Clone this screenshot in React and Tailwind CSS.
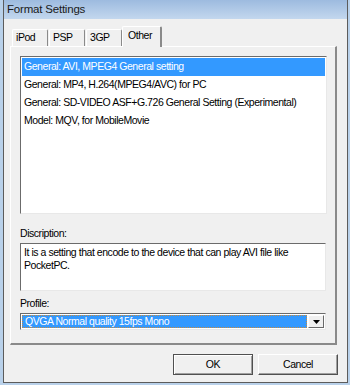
import React from "react";

const items = [
  "General: AVI, MPEG4 General setting",
  "General: MP4, H.264(MPEG4/AVC) for PC",
  "General: SD-VIDEO ASF+G.726 General Setting (Experimental)",
  "Model: MQV, for MobileMovie",
];

const tabs = ["iPod", "PSP", "3GP"];

export default function App() {
  return (
    <div className="w-[350px] h-[385px] bg-[#b9d1ea] pl-[3px] pr-[2px] pb-[2px] font-['Liberation_Sans',sans-serif] text-[10.5px] tracking-[-0.45px] text-black">
      <div className="h-full flex flex-col border-x border-b border-[#5c5c5c] bg-[#f0f0f0]">
        {/* Title bar */}
        <div className="h-[19px] shrink-0 flex items-center pl-[3px] bg-gradient-to-b from-[#9dbbdf] to-[#c3d7ee] text-[11.5px] tracking-[-0.2px] text-[#1a1a1a]">
          Format Settings
        </div>

        {/* Tabs */}
        <div className="flex items-end h-[27px] ml-[8px] relative z-10">
          {tabs.map((t) => (
            <div
              key={t}
              className="w-[36px] h-[17px] mr-[1px] flex items-center pl-[3px] border-t border-l border-white border-r border-r-[#8a8a8a] rounded-t-[2px] bg-[#f0f0f0]"
            >
              {t}
            </div>
          ))}
          <div className="w-[40px] h-[21px] -mb-px -ml-[1px] flex items-center pl-[5px] pb-[2px] border-t border-l border-white border-r-2 border-r-[#8a8a8a] rounded-t-[2px] bg-[#f0f0f0]">
            Other
          </div>
        </div>

        {/* Tab panel */}
        <div className="ml-[6px] mr-[10px] h-[299px] border-t border-l border-white border-r-2 border-b-2 border-r-[#8a8a8a] border-b-[#8a8a8a] pt-[9px] pl-[9px]">
          <div className="w-[307px] h-[158px] border-t border-l border-[#6b6b6b] border-r border-b border-r-[#e8e8e8] border-b-[#e8e8e8] bg-white p-[1px]">
            {items.map((it, i) => (
              <div
                key={it}
                className={`h-[18px] flex items-center pl-[2px] whitespace-nowrap ${
                  i === 0 ? "bg-[#3399ff] text-white" : ""
                }`}
              >
                {it}
              </div>
            ))}
          </div>

          <div className="mt-[13px] h-[13px] leading-[13px]">Discription:</div>
          <div className="mt-[3px] w-[306px] h-[48px] border-t border-l border-[#6b6b6b] border-r border-b border-r-[#e8e8e8] border-b-[#e8e8e8] bg-white pl-[3px] pt-[2px] leading-[13px] whitespace-nowrap">
            It is a setting that encode to the device that can play AVI file like
            <br />
            PocketPC.
          </div>

          <div className="mt-[6px] h-[13px] leading-[13px]">Profile:</div>
          <div className="mt-[3px] w-[306px] h-[17px] flex items-center border-t border-l border-[#6b6b6b] border-r border-b border-r-[#e8e8e8] border-b-[#e8e8e8] bg-white pl-[1px] pr-[1px]">
            <div className="flex-1 h-[13px] flex items-center bg-[#3399ff] text-white border border-dotted border-[#c98a3c] pl-[2px] whitespace-nowrap">
              QVGA Normal quality 15fps Mono
            </div>
            <div className="w-[16px] h-[13px] ml-[1px] flex items-center justify-center bg-[#f0f0f0] border-t border-l border-white border-r border-b border-r-[#696969] border-b-[#696969]">
              <svg width="7" height="4" viewBox="0 0 7 4">
                <path d="M0 0 H7 L3.5 4 Z" fill="#000" />
              </svg>
            </div>
          </div>
        </div>

        {/* Buttons */}
        <div className="flex justify-end gap-[5px] mt-[9px] mr-[9px]">
          <button className="w-[80px] h-[21px] bg-[#f0f0f0] border border-[#505050] shadow-[inset_1px_1px_0_#ffffff,inset_-1px_-1px_0_#a0a0a0]">
            OK
          </button>
          <button className="w-[80px] h-[21px] bg-[#f0f0f0] border-t border-l border-white border-r border-b border-r-[#505050] border-b-[#505050] shadow-[inset_-1px_-1px_0_#a0a0a0]">
            Cancel
          </button>
        </div>
      </div>
    </div>
  );
}
